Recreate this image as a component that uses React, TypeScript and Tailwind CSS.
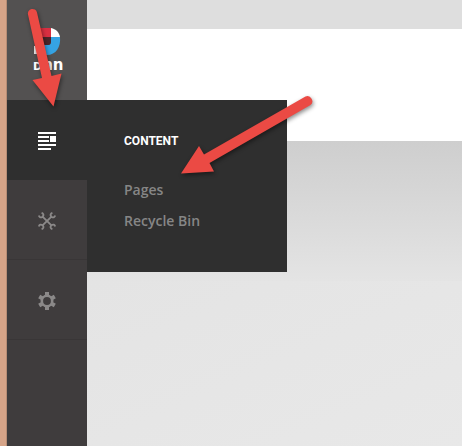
import type { ReactNode } from "react";

function Logo() {
  return (
    <svg width="32" height="44" viewBox="0 0 32 44" className="overflow-visible" role="img" aria-label="DNN">
      <path d="M5 0H17V9H5Z" fill="#d92f41" />
      <path d="M17 0C22 1 25 4 26 9H17Z" fill="#fff" />
      <path d="M17 9H26C27 19 22 27 13 27H8V17H14C16 17 17 15 17 13Z" fill="#35a3e3" />
      <path d="M8 9H17V13C17 16 16 17 14 17H8Z" fill="#4b2529" />
      <path d="M0 18H8V22L4 26H0Z" fill="#e8e8e8" />
      <text x="-1" y="42" fill="#fff" fontFamily="DejaVu Sans, sans-serif" fontWeight="700" fontSize="11">
        D<tspan fontSize="15">nn</tspan>
      </text>
    </svg>
  );
}

function ContentIcon() {
  return (
    <svg width="18" height="18" viewBox="0 0 18 18" fill="currentColor" shapeRendering="crispEdges" aria-hidden="true">
      <path d="M0 0H18V2H0ZM0 4H11V6H0ZM0 8H11V10H0ZM0 12H18V14H0ZM0 16H13V18H0ZM12 4H18V10H12Z" />
    </svg>
  );
}

function ToolsIcon() {
  const wrench =
    "M3.6 .8C5.400 1.400 5.900 3 5 4.200L4.200 5C3 5.900 1.400 5.400 .8 3.6M14.400 17.200C12.600 16.600 12.100 15 13 13.800L13.800 13C15 12.100 16.600 12.600 17.200 14.400M4.800 4.800 13.200 13.200";
  return (
    <svg
      width="18"
      height="18"
      viewBox="0 0 18 18"
      fill="none"
      stroke="currentColor"
      strokeWidth="1.8"
      aria-hidden="true"
    >
      <path d={wrench} />
      <path d={wrench} transform="translate(18 0) scale(-1 1)" />
    </svg>
  );
}

function GearIcon() {
  return (
    <svg width="18" height="18" viewBox="0 0 18 18" aria-hidden="true">
      <g fill="currentColor">
        <rect x="7" y="0" width="4" height="4" />
        <rect x="7" y="0" width="4" height="4" transform="rotate(60 9 9)" />
        <rect x="7" y="0" width="4" height="4" transform="rotate(120 9 9)" />
        <rect x="7" y="0" width="4" height="4" transform="rotate(180 9 9)" />
        <rect x="7" y="0" width="4" height="4" transform="rotate(240 9 9)" />
        <rect x="7" y="0" width="4" height="4" transform="rotate(300 9 9)" />
      </g>
      <circle cx="9" cy="9" r="5.2" fill="none" stroke="currentColor" strokeWidth="2.6" />
    </svg>
  );
}

function NavButton({ label, children }: { label: string; children: ReactNode }) {
  return (
    <button
      type="button"
      aria-label={label}
      className="flex h-20 w-full items-center justify-center border-b border-[#393637] pt-[3px] text-[#8b8989]"
    >
      {children}
    </button>
  );
}

function Arrows() {
  return (
    <svg
      className="pointer-events-none absolute left-0 top-0 drop-shadow-[1px_2px_2px_rgba(0,0,0,0.45)]"
      width="330"
      height="200"
      viewBox="0 0 330 200"
      fill="#eb4a44"
      aria-hidden="true"
    >
      <path d="M28 14.5A4.6 4.6 0 0 1 37 12.5L51.5 76 61.5 73.5 53.5 106.5 32.5 80 42 78Z" />
      <path d="M305.5 96.5A5 5 0 0 1 310.500 105L209.500 163 214 171.500 181 173.500 199 146 204 154.500Z" />
    </svg>
  );
}

export default function App() {
  return (
    <div className="relative flex min-h-screen bg-[#e4e4e4]">
      <div className="w-[7px] shrink-0 border-r border-[#b78d75] bg-[#d6a488]" />

      <aside className="w-20 shrink-0 bg-[#3f3c3d]">
        <a href="#home" aria-label="Home" className="flex h-[100px] items-end justify-center bg-[#535151] pb-7 pl-1.5">
          <Logo />
        </a>
        <nav aria-label="Main">
          <div className="relative">
            <button
              type="button"
              aria-label="Content"
              aria-expanded="true"
              className="flex h-20 w-full items-center justify-center bg-[#2f2f2f] pt-0.5 text-white"
            >
              <ContentIcon />
            </button>
            <section className="absolute left-full top-0 h-[172px] w-[200px] bg-[#2f2f2f] px-[37px] pt-8">
              <h2 className="font-[Roboto,sans-serif] text-xs leading-[18px] font-bold text-white">CONTENT</h2>
              <ul className="pt-6 font-['Open_Sans',sans-serif] text-sm leading-[31px] font-semibold text-[#868686]">
                <li>
                  <a href="#pages">Pages</a>
                </li>
                <li>
                  <a href="#recycle-bin">Recycle Bin</a>
                </li>
              </ul>
            </section>
          </div>
          <NavButton label="Tools">
            <ToolsIcon />
          </NavButton>
          <NavButton label="Settings">
            <GearIcon />
          </NavButton>
        </nav>
      </aside>

      <main className="flex min-w-0 flex-1 flex-col">
        <div className="h-[29px] bg-[#dedede]" />
        <div className="h-28 bg-white" />
        <div className="h-[140px] bg-linear-to-b from-[#cecece] to-[#e4e4e4]" />
        <div className="flex-1 bg-linear-to-br from-[#e4e4e4] to-[#e8e8e8]" />
      </main>

      <Arrows />
    </div>
  );
}
